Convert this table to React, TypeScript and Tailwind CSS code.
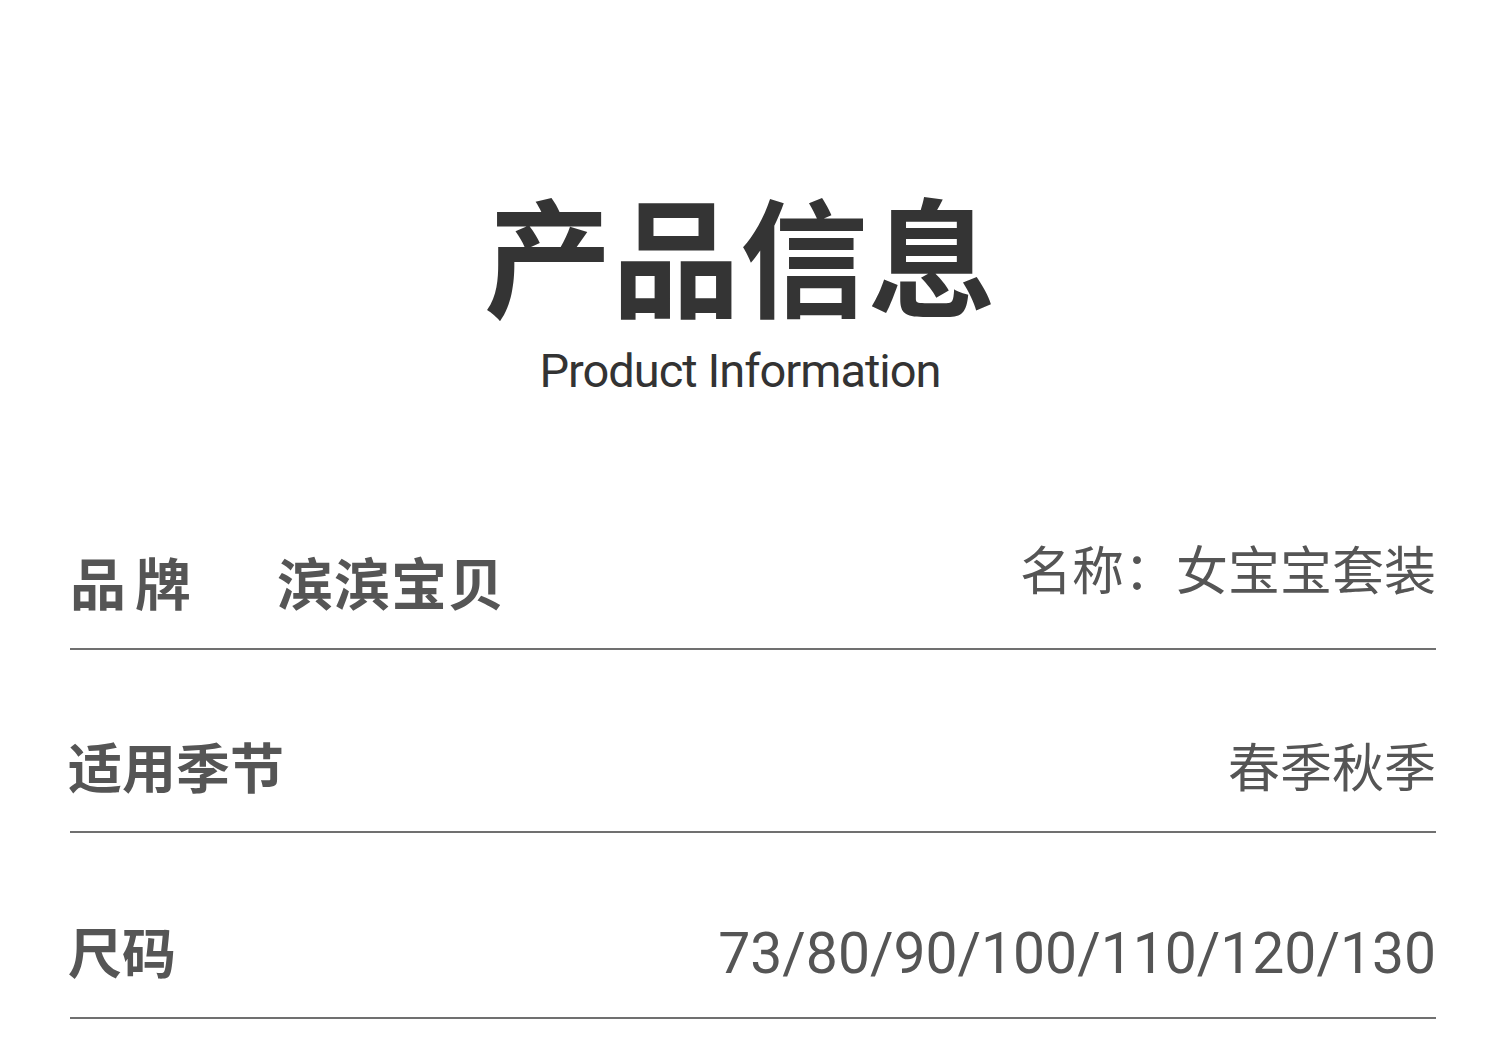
export default function App() {
  const cjk = { fontFamily: '"Noto Sans CJK SC", "Noto Sans", sans-serif' };
  const latin = { fontFamily: 'Roboto, "Noto Sans", sans-serif' };
  return (
    <div className="w-[1500px] h-[1046px] bg-white overflow-hidden" style={cjk}>
      <div className="flex flex-col items-center pt-[189px] pr-[20px]">
        <div className="text-[128px] leading-none font-bold text-[#343434]">产品信息</div>
        <div className="mt-[30px] text-[47px] leading-none tracking-[-1px] text-[#333333]" style={latin}>
          Product Information
        </div>
      </div>

      <div className="pl-[70px] pr-[64px] mt-[148px]">
        <div className="flex items-start justify-between border-b-2 border-[#707070] pb-[39px]">
          <div className="flex pt-[11px] text-[56px] leading-none font-bold text-[#555555]">
            <span className="tracking-[9px]">品牌</span>
            <span className="ml-[77px] tracking-[1px]">滨滨宝贝</span>
          </div>
          <div className="text-[52px] leading-none text-[#555555]">名称：女宝宝套装</div>
        </div>

        <div className="flex items-start justify-between border-b-2 border-[#707070] pt-[89px] pb-[38px]">
          <div className="text-[54px] leading-none font-bold text-[#555555] -ml-[2px]">适用季节</div>
          <div className="text-[52px] leading-none text-[#555555]">春季秋季</div>
        </div>

        <div className="flex items-start justify-between border-b-2 border-[#707070] pt-[91px] pb-[35px]">
          <div className="text-[54px] leading-none font-bold text-[#555555] -ml-[2px]">尺码</div>
          <div className="text-[57px] leading-none text-[#555555] mt-[1px]" style={latin}>
            73/80/90/100/110/120/130
          </div>
        </div>
      </div>
    </div>
  );
}
